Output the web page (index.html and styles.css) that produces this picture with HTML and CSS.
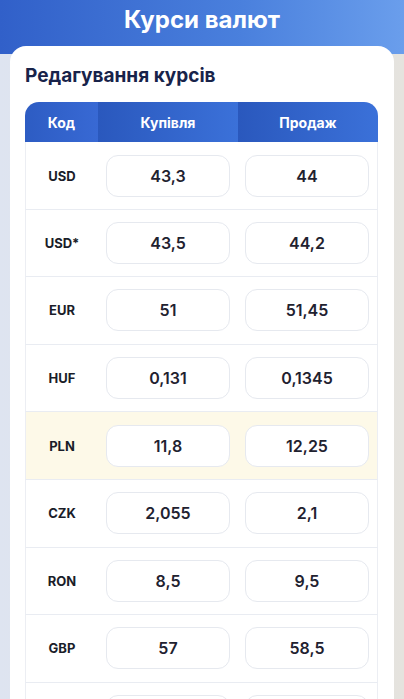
FILE: index.html
```html
<!DOCTYPE html>
<html>

<head>
    <meta charset="utf-8">
    <title>Курси валют</title>
    <meta name="viewport" content="width=device-width, initial-scale=1.0">
    <link rel="stylesheet" href="styles.css">
</head>

<body>
    <header class="topBar">
        <h1>Курси валют</h1>
    </header>

    <main class="card">
        <h2>Редагування курсів</h2>

        <table class="rates">
            <thead>
                <tr>
                    <th class="codeCol">Код</th>
                    <th>Купівля</th>
                    <th>Продаж</th>
                </tr>
            </thead>
            <tbody>
                <tr>
                    <td class="code">USD</td>
                    <td><input class="rate" type="text" value="43,3"></td>
                    <td><input class="rate" type="text" value="44"></td>
                </tr>
                <tr>
                    <td class="code">USD*</td>
                    <td><input class="rate" type="text" value="43,5"></td>
                    <td><input class="rate" type="text" value="44,2"></td>
                </tr>
                <tr>
                    <td class="code">EUR</td>
                    <td><input class="rate" type="text" value="51"></td>
                    <td><input class="rate" type="text" value="51,45"></td>
                </tr>
                <tr>
                    <td class="code">HUF</td>
                    <td><input class="rate" type="text" value="0,131"></td>
                    <td><input class="rate" type="text" value="0,1345"></td>
                </tr>
                <tr class="highlight">
                    <td class="code">PLN</td>
                    <td><input class="rate" type="text" value="11,8"></td>
                    <td><input class="rate" type="text" value="12,25"></td>
                </tr>
                <tr>
                    <td class="code">CZK</td>
                    <td><input class="rate" type="text" value="2,055"></td>
                    <td><input class="rate" type="text" value="2,1"></td>
                </tr>
                <tr>
                    <td class="code">RON</td>
                    <td><input class="rate" type="text" value="8,5"></td>
                    <td><input class="rate" type="text" value="9,5"></td>
                </tr>
                <tr>
                    <td class="code">GBP</td>
                    <td><input class="rate" type="text" value="57"></td>
                    <td><input class="rate" type="text" value="58,5"></td>
                </tr>
                <!-- next row is below the fold, only its boxes peek in -->
                <tr>
                    <td class="code"></td>
                    <td><input class="rate" type="text"></td>
                    <td><input class="rate" type="text"></td>
                </tr>
            </tbody>
        </table>
    </main>
</body>
</html>
```

FILE: styles.css
```css
* {
    box-sizing: border-box;
}

html {
    height: 100%;
}

body {
    margin: 0;
    min-height: 100%;
    font-family: Inter, "Noto Sans", sans-serif;
    background: linear-gradient(90deg, #dee4f0, #e5e3de);
    overflow: hidden;
}

.topBar {
    height: 54px;
    background: linear-gradient(90deg, #3160c9, #4a80dd 60%, #6a9eec);
}

.topBar h1 {
    margin: 0;
    line-height: 40px;
    text-align: center;
    color: #fff;
    font-size: 24px;
    font-weight: 700;
}

.card {
    margin: -8px 10px 0;
    padding: 16px 16px 16px 15px;
    background: #fff;
    border-radius: 16px;
}

.card h2 {
    margin: 0 0 12px;
    line-height: 28px;
    font-size: 19px;
    font-weight: 700;
    color: #18234a;
}

.rates {
    width: 353px;
    border-collapse: separate;
    border-spacing: 0;
    table-layout: fixed;
}

.rates th {
    height: 40px;
    padding: 0;
    color: #fff;
    font-size: 14px;
    font-weight: 700;
    background: linear-gradient(90deg, #2a58bd, #3b71d9);
}

.rates th.codeCol {
    width: 73px;
    border-top-left-radius: 14px;
    background: linear-gradient(90deg, #2d5cc3, #3869d4);
}

.rates th:last-child {
    border-top-right-radius: 14px;
}

.rates td {
    height: 67.6px;
    padding: 0 8px;
    border-bottom: 1px solid #e9ecf2;
    text-align: center;
}

.rates td:first-child {
    border-left: 1px solid #eceef3;
}

.rates td:last-child {
    border-right: 1px solid #eceef3;
    padding-left: 7px;
}

.rates td.code {
    padding: 0;
    font-size: 13px;
    font-weight: 700;
    color: #1a1d29;
}

.rates tbody tr:first-child td {
    padding-top: 1px;
}

.highlight td {
    background: #fdf9e8;
}

.rate {
    display: block;
    width: 124px;
    height: 42px;
    border: 1px solid #e6e9ef;
    border-radius: 12px;
    background: #fff;
    text-align: center;
    font-family: Inter, "Noto Sans", sans-serif;
    font-size: 16px;
    font-weight: 600;
    color: #1f2230;
    outline: none;
}
```
